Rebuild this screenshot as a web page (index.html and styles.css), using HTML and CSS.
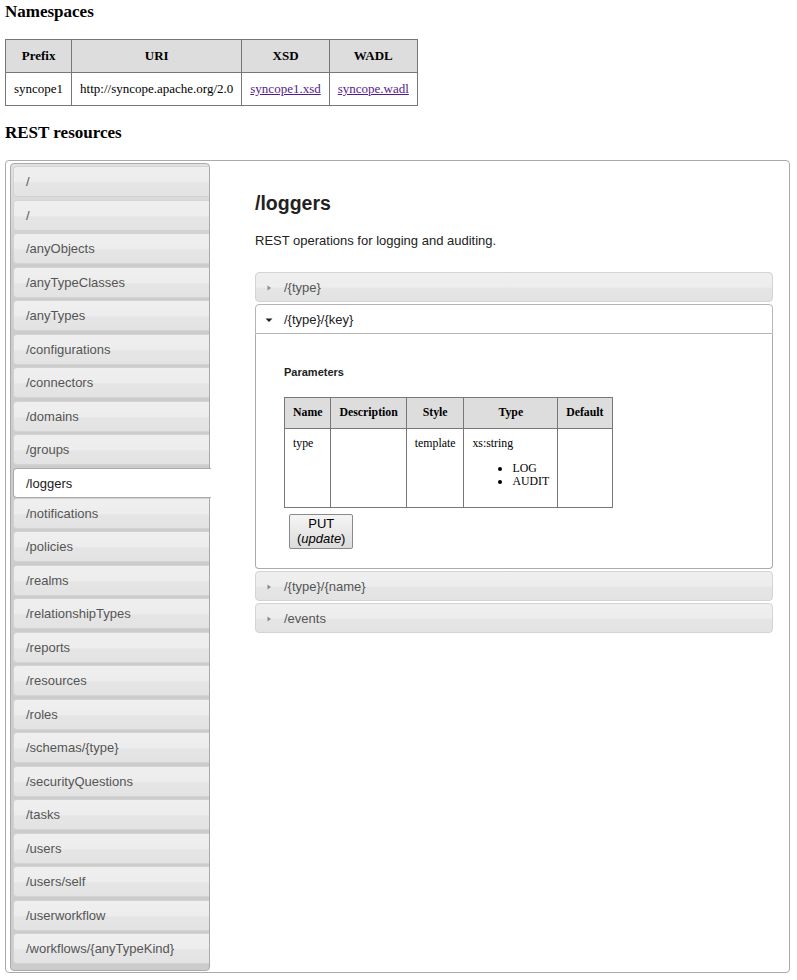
FILE: index.html
```html
<!DOCTYPE html>
<html>
<head>
<meta charset="utf-8">
<title>WADL</title>
<link rel="stylesheet" href="styles.css">
</head>
<body>
<h3 class="section">Namespaces</h3>
<table class="ns">
  <thead>
    <tr><th>Prefix</th><th>URI</th><th>XSD</th><th>WADL</th></tr>
  </thead>
  <tbody>
    <tr>
      <td>syncope1</td>
      <td>http://syncope.apache.org/2.0</td>
      <td><a href="#">syncope1.xsd</a></td>
      <td><a href="#">syncope.wadl</a></td>
    </tr>
  </tbody>
</table>
<h3 class="section rest">REST resources</h3>
<div class="tabs">
  <ul class="nav">
    <li class="tab">/</li>
    <li class="tab">/</li>
    <li class="tab">/anyObjects</li>
    <li class="tab">/anyTypeClasses</li>
    <li class="tab">/anyTypes</li>
    <li class="tab">/configurations</li>
    <li class="tab">/connectors</li>
    <li class="tab">/domains</li>
    <li class="tab">/groups</li>
    <li class="tab active">/loggers</li>
    <li class="tab">/notifications</li>
    <li class="tab">/policies</li>
    <li class="tab">/realms</li>
    <li class="tab">/relationshipTypes</li>
    <li class="tab">/reports</li>
    <li class="tab">/resources</li>
    <li class="tab">/roles</li>
    <li class="tab">/schemas/{type}</li>
    <li class="tab">/securityQuestions</li>
    <li class="tab">/tasks</li>
    <li class="tab">/users</li>
    <li class="tab">/users/self</li>
    <li class="tab">/userworkflow</li>
    <li class="tab">/workflows/{anyTypeKind}</li>
  </ul>
  <div class="panel">
    <h2 class="title">/loggers</h2>
    <p class="desc">REST operations for logging and auditing.</p>
    <div class="accordion">
      <div class="acc-head">
        <svg class="icon" width="8" height="8" viewBox="0 0 8 8"><path d="M2.5 1.5 L6 4 L2.5 6.5 Z" fill="#8c8c8c"/></svg>
        /{type}
      </div>
      <div class="acc-head open">
        <svg class="icon" width="8" height="8" viewBox="0 0 8 8"><path d="M0.5 2.5 L7.5 2.5 L4 6 Z" fill="#222"/></svg>
        /{type}/{key}
      </div>
      <div class="acc-body">
        <h4 class="params">Parameters</h4>
        <table class="ptable">
          <thead>
            <tr><th>Name</th><th>Description</th><th>Style</th><th>Type</th><th>Default</th></tr>
          </thead>
          <tbody>
            <tr>
              <td>type</td>
              <td></td>
              <td>template</td>
              <td>xs:string
                <ul class="enum"><li>LOG</li><li>AUDIT</li></ul>
              </td>
              <td></td>
            </tr>
          </tbody>
        </table>
        <div class="btn-wrap">
          <button class="method">PUT<br>(<i>update</i>)</button>
        </div>
      </div>
      <div class="acc-head">
        <svg class="icon" width="8" height="8" viewBox="0 0 8 8"><path d="M2.5 1.5 L6 4 L2.5 6.5 Z" fill="#8c8c8c"/></svg>
        /{type}/{name}
      </div>
      <div class="acc-head">
        <svg class="icon" width="8" height="8" viewBox="0 0 8 8"><path d="M2.5 1.5 L6 4 L2.5 6.5 Z" fill="#8c8c8c"/></svg>
        /events
      </div>
    </div>
  </div>
</div>
</body>
</html>
```
FILE: styles.css
```css
html, body {
  background: #fff;
}
body {
  margin: 0;
  padding: 2px 7px 0 5px;
  font-family: "Liberation Serif", "Times New Roman", serif;
  color: #000;
}
.section {
  font-size: 17px;
  line-height: 20px;
  font-weight: bold;
  margin: 0 0 17px;
}
.section.rest {
  margin: 17px 0 17px;
}
.ns {
  border-collapse: collapse;
  font-size: 13px;
  line-height: 16px;
}
.ns th, .ns td {
  border: 1px solid #777;
  padding: 8px 8px 8px 8px;
  text-align: left;
}
.ns th {
  background: #ddd;
  text-align: center;
  font-weight: bold;
}
.ns a {
  color: #551a8b;
  text-decoration: underline;
}

.tabs {
  display: flex;
  align-items: flex-start;
  border: 1px solid #aaa;
  border-radius: 4px;
  padding: 2px 0 1px 4px;
  font-family: "Liberation Sans", Arial, sans-serif;
}
.nav {
  list-style: none;
  margin: 0;
  padding: 2px 0 3px 2px;
  width: 196px;
  flex: none;
  border: 1px solid #aaa;
  border-radius: 4px;
  background: linear-gradient(to bottom, #e2e2e2 0, #cccccc 100px, #cccccc 100%);
}
.tab {
  border: 1px solid #d3d3d3;
  border-right: 0;
  border-radius: 4px 0 0 4px;
  background: linear-gradient(to bottom, #efefef 0, #ededed 50%, #e5e5e5 55%, #e3e3e3 100%);
  font-size: 13px;
  line-height: 15px;
  padding: 7px 12px;
  margin-bottom: 2.5px;
  color: #555;
  white-space: nowrap;
}
.tab.active {
  background: #fff;
  border-color: #aaa;
  border-right: 0;
  color: #212121;
  margin-right: -2px;
  padding: 7px 12px 6px;
  margin-bottom: 0;
  position: relative;
}
.panel {
  flex: 1;
  min-width: 0;
  padding: 0 16px 0 45px;
}
.title {
  font-size: 19.5px;
  line-height: 23px;
  font-weight: bold;
  color: #222;
  margin: 29px 0 18px;
}
.desc {
  font-size: 13px;
  line-height: 15px;
  color: #222;
  margin: 0 0 24px;
}
.accordion {
  font-size: 13px;
}
.acc-head {
  border: 1px solid #d3d3d3;
  border-radius: 4px;
  background: linear-gradient(to bottom, #efefef 0, #ededed 50%, #e5e5e5 55%, #e3e3e3 100%);
  color: #555;
  line-height: 15px;
  padding: 6.5px 7px 6.5px 28px;
  margin-top: 2.3px;
  position: relative;
}
.acc-head:first-child {
  margin-top: 0;
}
.acc-head .icon {
  position: absolute;
  left: 9px;
  top: 11px;
}
.acc-head.open {
  background: #fff;
  border-color: #b5b5b5;
  border-radius: 4px 4px 0 0;
  color: #212121;
}
.acc-body {
  border: 1px solid #aaa;
  border-top: 0;
  border-radius: 0 0 4px 4px;
  padding: 13px 28px 13px 28px;
  background: #fff;
}
.params {
  font-size: 11px;
  line-height: 13px;
  font-weight: bold;
  color: #222;
  margin: 19px 0 18px;
}
.ptable {
  border-collapse: collapse;
  font-family: "Liberation Serif", "Times New Roman", serif;
  font-size: 11.8px;
  line-height: 13.5px;
}
.ptable th, .ptable td {
  border: 1px solid #777;
  padding: 8px;
  vertical-align: top;
  text-align: left;
}
.ptable th {
  background: #ddd;
  text-align: center;
  font-weight: bold;
}
.enum {
  margin: 11.5px 0 10px;
  padding-left: 40px;
}
.btn-wrap {
  margin: 6px 0 6px 5px;
}
.method {
  font-family: "Liberation Sans", Arial, sans-serif;
  font-size: 13px;
  line-height: 15px;
  color: #000;
  padding: 1.5px 7px;
  border: 1px solid #8a8a8a;
  border-radius: 2px;
  background: linear-gradient(to bottom, #f5f5f5, #dcdcdc);
  text-align: center;
}
```
